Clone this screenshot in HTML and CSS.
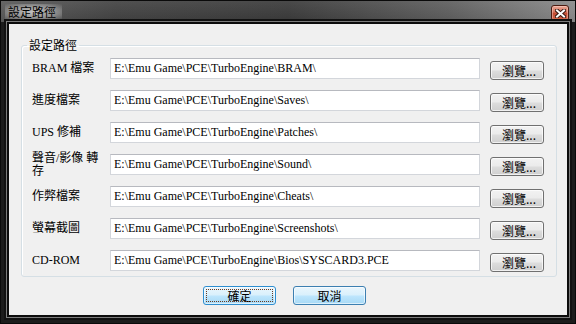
FILE: index.html
```html
<!DOCTYPE html>
<html>
<head>
    <title>設定路徑</title>
    <link rel="stylesheet" href="styles.css">
</head>
<body>
    <div class="window">
        <div class="titlebar">
            <span class="title">設定路徑</span>
            <button class="close" title="關閉">
                <svg width="11" height="9" viewBox="0 0 11 9">
                    <path d="M2 1.5 L9 7.5 M9 1.5 L2 7.5" stroke="#3a1a12" stroke-width="4" stroke-linecap="square"/>
                    <path d="M2 1.5 L9 7.5 M9 1.5 L2 7.5" stroke="#ffffff" stroke-width="2" stroke-linecap="square"/>
                </svg>
            </button>
        </div>
        <div class="client">
            <fieldset class="group">
                <legend>設定路徑</legend>
                <div class="rows">
                    <label>BRAM 檔案</label>
                    <input class="path" type="text" value="E:\Emu Game\PCE\TurboEngine\BRAM\">
                    <button class="browse">瀏覽...</button>

                    <label>進度檔案</label>
                    <input class="path" type="text" value="E:\Emu Game\PCE\TurboEngine\Saves\">
                    <button class="browse">瀏覽...</button>

                    <label>UPS 修補</label>
                    <input class="path" type="text" value="E:\Emu Game\PCE\TurboEngine\Patches\">
                    <button class="browse">瀏覽...</button>

                    <label>聲音/影像 轉存</label>
                    <input class="path" type="text" value="E:\Emu Game\PCE\TurboEngine\Sound\">
                    <button class="browse">瀏覽...</button>

                    <label>作弊檔案</label>
                    <input class="path" type="text" value="E:\Emu Game\PCE\TurboEngine\Cheats\">
                    <button class="browse">瀏覽...</button>

                    <label>螢幕截圖</label>
                    <input class="path" type="text" value="E:\Emu Game\PCE\TurboEngine\Screenshots\">
                    <button class="browse">瀏覽...</button>

                    <label>CD-ROM</label>
                    <input class="path" type="text" value="E:\Emu Game\PCE\TurboEngine\Bios\SYSCARD3.PCE">
                    <button class="browse">瀏覽...</button>
                </div>
            </fieldset>
            <div class="actions">
                <button class="btn focused">確定</button>
                <button class="btn">取消</button>
            </div>
        </div>
    </div>
</body>
</html>
```

FILE: styles.css
```css
body {
    margin: 0;
    font-family: "Liberation Serif", "Times New Roman", "Noto Sans CJK TC", serif;
    font-size: 12px;
    background: #1a1a1a;
}
.window {
    width: 576px;
    height: 324px;
    display: flex;
    flex-direction: column;
    background: #1c1c1c;
    box-sizing: border-box;
    border: 1px solid #0a0a0a;
}
.titlebar {
    height: 21px;
    display: flex;
    align-items: flex-start;
    background:
        linear-gradient(to bottom, rgba(255,255,255,0.08), rgba(0,0,0,0.05)),
        linear-gradient(to right, #595959 0%, #424242 20%, #3a3a3a 50%, #5e5e5e 78%, #8a8a8a 100%);
}
.title {
    margin: 3px 0 0 4px;
    padding: 1px 6px 1px 3px;
    font-family: "Noto Sans CJK TC", sans-serif;
    font-size: 12px;
    line-height: 14px;
    color: #000;
    background: radial-gradient(ellipse at center, rgba(225,225,225,0.8) 0%, rgba(200,200,200,0.5) 55%, rgba(200,200,200,0) 100%);
}
.close {
    margin: 4px 6px 0 auto;
    width: 18px;
    height: 16px;
    padding: 0;
    display: flex;
    align-items: center;
    justify-content: center;
    border: 1px solid #4b1b10;
    border-radius: 3px;
    background: linear-gradient(to bottom, #eba897 0%, #d6715a 45%, #c24a31 50%, #d4664a 100%);
    box-shadow: inset 0 0 0 1px rgba(255,220,210,0.45);
}
.client {
    flex: 1;
    margin: 0 6px 6px 6px;
    border: 2px solid #0c0c0c;
    box-shadow: 0 0 0 1px #7c7c7c, 0 0 0 3px #111;
    background: #f0f0f0;
    display: flex;
    flex-direction: column;
}
.group {
    margin: 14px 11px 0 12px;
    padding: 6px 12px 5px 10px;
    border: 1px solid #d5dfe5;
    border-radius: 3px;
    box-shadow: inset 1px 1px 0 #fff;
}
.group legend {
    margin-left: -5px;
    padding: 0 2px;
    font-family: "Noto Sans CJK TC", sans-serif;
    line-height: 14px;
    color: #000;
}
.rows {
    display: grid;
    grid-template-columns: 78px 370px 64px;
    grid-auto-rows: 21px;
    row-gap: 11px;
    align-items: center;
}
.rows label {
    padding-right: 8px;
    line-height: 13px;
    color: #000;
}
.path {
    box-sizing: border-box;
    height: 21px;
    width: 100%;
    margin: 0;
    padding: 0 3px;
    font-family: "Liberation Serif", "Times New Roman", "Noto Sans CJK TC", serif;
    font-size: 12px;
    color: #000;
    background: #fff;
    border: 1px solid #d3d6db;
    border-top-color: #b7b9bf;
}
.browse {
    justify-self: end;
    align-self: start;
    margin-top: 3px;
    width: 54px;
    height: 19px;
    padding: 0 0 0 4px;
    font-family: "Noto Sans CJK TC", sans-serif;
    font-size: 12px;
    line-height: 15px;
    color: #000;
    border: 1px solid #707070;
    border-radius: 3px;
    background: linear-gradient(to bottom, #f2f2f2 0%, #ebebeb 48%, #dddddd 52%, #cfcfcf 100%);
    box-shadow: inset 0 0 0 1px rgba(255,255,255,0.7);
}
.actions {
    display: flex;
    justify-content: center;
    gap: 17px;
    margin-top: 9px;
    padding-right: 7px;
}
.btn {
    width: 73px;
    height: 19px;
    padding: 0;
    font-family: "Noto Sans CJK TC", sans-serif;
    font-size: 12px;
    line-height: 15px;
    color: #000;
    border: 1px solid #3c7fb1;
    border-radius: 3px;
    background: linear-gradient(to bottom, #eaf6fd 0%, #d9f0fc 48%, #bee6fd 52%, #a7d9f5 100%);
    box-shadow: inset 0 0 0 1px rgba(255,255,255,0.6);
}
.btn.focused {
    border-color: #2e8ed0;
    outline: 1px dotted #6b3a20;
    outline-offset: -4px;
}
```
